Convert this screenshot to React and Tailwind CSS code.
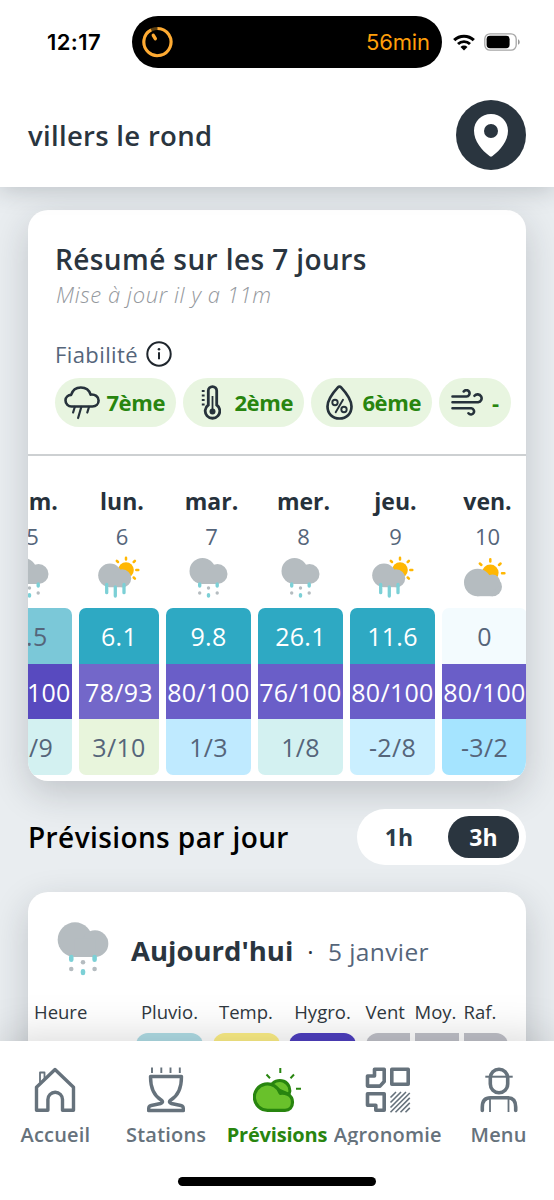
import clsx from "clsx";

const days = [
  { name: "dim.", date: 5, icon: "sleet", rain: "0.5", hygro: "93/100", temp: "-1/9", width: "w-[85px]", rainBg: "bg-[#7bc8d8] text-[#55657a]", hygroBg: "bg-[#584abf]", tempBg: "bg-[#d3f1f1]" },
  { name: "lun.", date: 6, icon: "sunRain", rain: "6.1", hygro: "78/93", temp: "3/10", width: "w-[80px]", rainBg: "bg-[#2ea9c3] text-white", hygroBg: "bg-[#7367c9]", tempBg: "bg-[#e8f5dc]" },
  { name: "mar.", date: 7, icon: "sleet", rain: "9.8", hygro: "80/100", temp: "1/3", width: "w-[85px]", rainBg: "bg-[#2ea9c3] text-white", hygroBg: "bg-[#6a5ec8]", tempBg: "bg-[#bfeaff]" },
  { name: "mer.", date: 8, icon: "sleet", rain: "26.1", hygro: "76/100", temp: "1/8", width: "w-[85px]", rainBg: "bg-[#2ea9c3] text-white", hygroBg: "bg-[#6a5ec8]", tempBg: "bg-[#d3f1f1]" },
  { name: "jeu.", date: 9, icon: "sunRain", rain: "11.6", hygro: "80/100", temp: "-2/8", width: "w-[85px]", rainBg: "bg-[#2ea9c3] text-white", hygroBg: "bg-[#6a5ec8]", tempBg: "bg-[#caefff]" },
  { name: "ven.", date: 10, icon: "sunCloud", rain: "0", hygro: "80/100", temp: "-3/2", width: "w-[85px]", rainBg: "bg-[#f3fbfe] text-[#55657a]", hygroBg: "bg-[#6a5ec8]", tempBg: "bg-[#a5e4ff]" }
];

const columns = [
  { label: "Pluvio.", className: "w-[67px] mr-[9.5px] text-center", bar: "rounded-t-xl bg-[#b0dde6]" },
  { label: "Temp.", className: "w-[67px] mr-[9.5px] text-center", bar: "rounded-t-xl bg-[#fdef86]" },
  { label: "Hygro.", className: "w-[67px] mr-[9.5px] text-center", bar: "rounded-t-xl bg-[#4e3fc0]" },
  { label: "Vent", className: "w-[44px] mr-[5px]", bar: "rounded-tl-xl bg-[#c0c1c9]" },
  { label: "Moy.", className: "w-[44px] mr-[5px]", bar: "bg-[#c0c1c9]" },
  { label: "Raf.", className: "w-[44px]", bar: "rounded-tr-xl bg-[#c0c1c9]" }
];

function SleetIcon({ className }) {
  return (
    <svg viewBox="0 0 39 40" className={className}>
      <g fill="#b5bcc0">
        <circle cx="13.5" cy="13" r="13" />
        <circle cx="28.5" cy="16" r="10" />
        <path d="M13 12h16v14H13z" />
        <circle cx="19.5" cy="30" r="1.7" />
        <circle cx="10.7" cy="35" r="1.7" />
        <circle cx="28.2" cy="35" r="1.7" />
      </g>
      <path d="M10.7 26v2M28.2 26v2M19.5 36.7v1.3" stroke="#7cd0d6" strokeWidth="3.4" strokeLinecap="round" />
    </svg>
  );
}

function SunRainIcon({ className }) {
  return (
    <svg viewBox="0 0 42 42" className={className}>
      <circle cx="28" cy="14" r="7.8" fill="#ffb703" />
      <path d="M28 1.8v1.8M35.7 6l1.2-1.2M38.3 14h2M35.7 21.5l1.2 1.2M20 6l-1.2-1.2" stroke="#ffb703" strokeWidth="2.5" strokeLinecap="round" />
      <g fill="#b5bcc0">
        <circle cx="12" cy="19.3" r="11.8" />
        <circle cx="24.2" cy="22.3" r="9" />
        <path d="M11 19h14v12.2H11z" />
      </g>
      <path d="M8.7 28.5v8.2M17.3 31v9M26 28.5v8.2" stroke="#7cd0d6" strokeWidth="3.3" strokeLinecap="round" />
    </svg>
  );
}

function SunCloudIcon({ className }) {
  return (
    <svg viewBox="0 0 42 40" className={className}>
      <circle cx="26.3" cy="14.8" r="8.3" fill="#ffb703" />
      <path d="M26.3 1.3v2.2M17.4 7l-1.6-1.5M35 7l1.6-1.5M38 15.3h2.4" stroke="#ffb703" strokeWidth="2.5" strokeLinecap="round" />
      <g fill="#b5bcc0">
        <circle cx="13.7" cy="24.5" r="13.7" />
        <circle cx="28.5" cy="28.7" r="9.5" />
        <circle cx="28.5" cy="24" r="7.6" />
        <path d="M13 24h16v14.2H13z" />
      </g>
    </svg>
  );
}

function DayIcon({ type }) {
  if (type === "sleet") return <SleetIcon className="mt-[2px] h-10 w-[39px]" />;
  if (type === "sunRain") return <SunRainIcon className="h-[42px] w-[42px]" />;
  return <SunCloudIcon className="mt-[2px] h-10 w-[42px]" />;
}

function StatusBar() {
  return (
    <div className="flex h-[52px] items-center font-['Inter',sans-serif]">
      <span className="ml-[47px] w-[85px] text-[22px] font-semibold tracking-[0.4px] text-black">12:17</span>
      <div className="flex h-[52px] w-[310px] items-center justify-between rounded-full bg-black pr-[12px] pl-[10px]">
        <svg viewBox="0 0 32 32" className="h-8 w-8" fill="none" strokeLinecap="round">
          <circle cx="15.5" cy="16" r="13.6" stroke="#5a3f12" strokeWidth="3" />
          <path d="M15.5 2.4A13.6 13.6 0 1 1 9.2 3.9" stroke="#ffab33" strokeWidth="3" strokeLinecap="butt" />
          <path d="M11.3 9.3l2 3.4" stroke="#ffab33" strokeWidth="3.4" />
        </svg>
        <span className="text-[22px] tracking-[-0.1px] text-[#ff9f0a]">56min</span>
      </div>
      <svg viewBox="0 0 22 17" className="ml-[11px] h-[17px] w-[22px]">
        <path d="M1.2 6.2a14 14 0 0 1 19.6 0" stroke="#000" strokeWidth="3.1" fill="none" />
        <path d="M5 10a8.7 8.7 0 0 1 12 0" stroke="#000" strokeWidth="2.9" fill="none" />
        <path d="M7.5 12.9a5 5 0 0 1 7 0L11 16.4z" fill="#000" />
      </svg>
      <svg viewBox="0 0 37 18" className="ml-[9px] h-[18px] w-[37px]">
        <rect x="0.8" y="0.8" width="31.4" height="16.4" rx="5.2" fill="none" stroke="#a5a5a5" strokeWidth="1.3" />
        <rect x="2.6" y="2.8" width="23" height="12.4" rx="3.4" fill="#000" />
        <path d="M34 6.2c2.3 1 2.3 4.6 0 5.6z" fill="#9a9a9a" />
      </svg>
    </div>
  );
}

function Header() {
  return (
    <header className="relative z-10 h-[187px] shrink-0 bg-white pt-[16px] shadow-[0_4px_22px_rgba(40,50,60,0.22)]">
      <StatusBar />
      <div className="mt-[32px] flex h-[70px] items-center justify-between px-7">
        <h1 className="pt-px text-[27.5px] font-semibold tracking-[0.3px] text-[#2a353f]">villers le rond</h1>
        <div className="flex h-[70px] w-[70px] items-center justify-center rounded-full bg-[#2a353f]">
          <svg viewBox="0 0 34 43" className="h-[43px] w-[34px]">
            <path fill="#fff" fillRule="evenodd" d="M17 0C7.6 0 0 7.3 0 16.7 0 27 7.7 36 15.8 42.3a2 2 0 0 0 2.4 0C26.3 36 34 27 34 16.7 34 7.3 26.4 0 17 0zm0 10a7 7 0 1 1 0 14 7 7 0 0 1 0-14z" />
          </svg>
        </div>
      </div>
    </header>
  );
}

function Pill({ className, children, label }) {
  return (
    <div className={clsx("flex h-[49px] shrink-0 items-center justify-between rounded-full bg-[#e8f5e0] text-[22px] font-bold text-[#28850f]", className)}>
      {children}
      <span>{label}</span>
    </div>
  );
}

function Reliability() {
  return (
    <div className="mt-[10px] flex gap-[7px] pl-[27px]">
      <Pill className="w-[121px] pr-[11px] pl-[9px] tracking-[-0.4px]" label="7ème">
        <svg viewBox="0 0 36 34" className="h-[34px] w-9" fill="none" stroke="#26323b" strokeWidth="2.6" strokeLinecap="round" strokeLinejoin="round">
          <path d="M8 20.5a6 6 0 0 1-6.5-6.2c0-3.3 2.8-5.4 5.6-5.4C8.6 4.2 12.5 1.5 16.8 1.5c5 0 8.6 3 9.8 7.1 4.4-.5 8 2 8 6 0 3.6-2.6 5.9-6.2 5.9H8z" />
          <path d="M10.8 21l-1.7 5.5M17.3 21l-3.2 11M25 21l-1.7 5.5" strokeWidth="2.2" />
        </svg>
      </Pill>
      <Pill className="w-[121px] pr-[11px] pl-[18px] tracking-[-0.4px]" label="2ème">
        <svg viewBox="0 0 20 36" className="h-9 w-5" fill="none" stroke="#26323b">
          <path d="M7.3 20V5.800a4.200 4.200 0 0 1 8.400 0V20a7.300 7.300 0 1 1-8.400 0z" strokeWidth="2.8" />
          <path d="M11.5 11v15" strokeWidth="1.8" />
          <circle cx="11.5" cy="26.5" r="3" fill="#26323b" stroke="none" />
          <path d="M0.8 6h2.8M0.8 10.500h2.800M0.800 15h2.800M0.800 19.500h2.800" strokeWidth="1.8" />
        </svg>
      </Pill>
      <Pill className="w-[121px] pr-[11px] pl-[15px] tracking-[-0.4px]" label="6ème">
        <svg viewBox="0 0 27 35" className="h-[35px] w-[27px]" fill="none" stroke="#26323b" strokeLinecap="round">
          <path d="M11.9 2.4C6.5 8.2 1.5 14.8 1.5 21.5c0 7.2 5 12 12 12s12-4.8 12-12c0-6.7-5-13.3-10.4-19.1a2.200 2.200 0 0 0-3.200 0z" strokeWidth="2.7" />
          <g strokeWidth="1.9">
            <circle cx="9" cy="17.5" r="2.7" />
            <circle cx="18" cy="24.5" r="2.7" />
            <path d="M17 14.8L9.7 27.2" />
          </g>
        </svg>
      </Pill>
      <Pill className="w-[72px] pr-[12px] pl-[12px]" label="-">
        <svg viewBox="0 0 33 27" className="h-[27px] w-[33px]" fill="none" stroke="#26323b" strokeWidth="2.6" strokeLinecap="round">
          <path d="M1.5 7.5h14a3.2 3.2 0 1 0-2.800-5M1.5 13.3h25.600a4 4 0 1 0-3.600-6.500M1.5 19.3h18.800a3.100 3.100 0 1 1-2.800 5" />
        </svg>
      </Pill>
    </div>
  );
}

function DayColumn({ day }) {
  return (
    <div className={clsx("flex shrink-0 flex-col items-center", day.width)}>
      <div className="pt-px pl-[6px] text-[23px] leading-8 font-bold text-[#26313b]">{day.name}</div>
      <div className="mt-[7px] pl-[6px] text-[22px] leading-6 text-[#55657a]">{day.date}</div>
      <div className="mt-2 flex h-[42px] justify-center">
        <DayIcon type={day.icon} />
      </div>
      <div className="mt-[10px] flex w-full flex-col overflow-hidden rounded-[7px] text-[25px] tracking-[0.3px] whitespace-nowrap">
        <div className={clsx("flex h-[55.5px] items-center justify-center pt-[2px]", day.rainBg)}>{day.rain}</div>
        <div className={clsx("flex h-[55.5px] items-center justify-center pt-[2px] text-white", day.hygroBg)}>{day.hygro}</div>
        <div className={clsx("flex h-[55.5px] items-center justify-center pt-[2px] text-[#55657a]", day.tempBg)}>{day.temp}</div>
      </div>
    </div>
  );
}

function SummaryCard() {
  return (
    <section className="h-[571px] shrink-0 overflow-hidden rounded-[20px] bg-white pt-[30px] shadow-[0_12px_36px_rgba(30,35,45,0.2)]">
      <h2 className="pt-px pl-[27px] text-[28px] leading-9 font-semibold tracking-[0.4px] text-[#2a353f]">Résumé sur les 7 jours</h2>
      <p className="mt-[3px] pl-[28px] text-[22px] leading-7 font-light tracking-[0.6px] text-[#94989d] italic">Mise à jour il y a 11m</p>
      <div className="mt-8 flex items-center gap-[8px] pl-[27px]">
        <span className="text-[22px] leading-7 tracking-[0.4px] text-[#55657a]">Fiabilité</span>
        <svg viewBox="0 0 26 26" className="h-[26px] w-[26px]" fill="none" stroke="#1f262d" strokeWidth="2">
          <circle cx="13" cy="13" r="11.7" />
          <path d="M13 11.3v7" />
          <circle cx="13" cy="8.3" r="1.3" fill="#1f262d" stroke="none" />
        </svg>
      </div>
      <Reliability />
      <div className="mt-[27px] h-[2px] bg-[#cdd0d2]" />
      <div className="mt-7 -ml-[41px] flex w-[600px] gap-[7px]">
        {days.map((day) => (
          <DayColumn key={day.name} day={day} />
        ))}
      </div>
    </section>
  );
}

function StepToggle() {
  return (
    <div className="flex h-14 w-[169px] items-center rounded-full bg-white pr-[7px] text-[23px] font-bold">
      <button className="w-[84px] text-[#2a3c4a]">1h</button>
      <button className="ml-auto h-[42px] w-[71px] rounded-full bg-[#2a353f] text-white">3h</button>
    </div>
  );
}

function TodayCard() {
  return (
    <section className="mt-[27px] h-[300px] shrink-0 rounded-[20px] bg-white pt-[30px] shadow-[0_12px_36px_rgba(30,35,45,0.2)]">
      <div className="flex h-[54px] items-center pl-[29px]">
        <SleetIcon className="h-[54px] w-[52px]" />
        <div className="mt-[5px] flex items-baseline pl-[22px] leading-9">
          <h3 className="w-[162px] text-[27.5px] font-bold whitespace-nowrap text-[#2a353f]">Aujourd'hui</h3>
          <span className="w-[35px] text-center text-[24px] text-[#2a353f]">·</span>
          <span className="text-[24.5px] tracking-[0.4px] text-[#55657a]">5 janvier</span>
        </div>
      </div>
      <div className="mt-6 flex pl-[6px] text-[18.5px] leading-6 text-[#2f3840]">
        <div className="w-[102px]">Heure</div>
        {columns.map((col) => (
          <div key={col.label} className={col.className}>
            {col.label}
            <div className={clsx("mt-[9px] h-[50px]", col.bar)} />
          </div>
        ))}
      </div>
    </section>
  );
}

function HomeIcon() {
  return (
    <svg viewBox="0 0 42 46" className="h-[46px] w-[42px]" fill="none" stroke="#66727c" strokeWidth="3.4" strokeLinejoin="round">
      <path d="M2.5 20.3L21 2.6l18.5 17.7v23h-11V32.5a7.300 7.300 0 0 0-14.600 0v10.800H2.5z" />
      <path d="M6 15.5V5.5h4.500v7" strokeWidth="1.8" />
    </svg>
  );
}

function StationIcon() {
  return (
    <svg viewBox="0 0 38 46" className="h-[46px] w-[38px]" fill="none" stroke="#66727c" strokeWidth="3.4" strokeLinejoin="round">
      <path d="M3.5 9.5h31c0 11.500-3 19-10.700 23.500-2 1.400-1.700 3 .5 3.500l9.500 2c2 .5 2.600 1 2.600 5H1.600c0-4 .6-4.500 2.600-5l9.500-2c2.200-.5 2.500-2.100.5-3.500C6.500 28.500 3.500 21 3.500 9.500z" />
      <path d="M5 .5v5.500M14.300 .5v5.500M23.500 .5v5.500M32.800 .5v5.500" strokeWidth="1.9" />
    </svg>
  );
}

function ForecastIcon() {
  return (
    <svg viewBox="0 0 48 46" className="h-[46px] w-12" stroke="#28850f" strokeLinejoin="round">
      <path d="M17.5 19.5a10 10 0 1 1 18.500 8z" fill="#69c12b" strokeWidth="3" />
      <path d="M14.5 43.3a13.200 13.200 0 1 1 12.700-17c3.500-.6 12.300.6 12.300 9 0 5-3 8-7.500 8z" fill="#69c12b" strokeWidth="3.2" />
      <path d="M27.3 1v5M13.5 7.5l3.500 3.700M41 7.5l-3.500 3.700M43 21.700h5" strokeWidth="2" />
    </svg>
  );
}

function FieldsIcon() {
  return (
    <svg viewBox="0 0 46 46" className="h-[46px] w-[46px]" fill="none" stroke="#66727c" strokeWidth="3.6" strokeLinejoin="round">
      <path d="M9.5 2.3h9.700v12.200l-4.200 4.600H2.5V9h7zM26.800 2.300H43.200v14.900H26.800zM2.500 26.700h16.700v16.600h-8.400v-5H2.500z" />
      <path d="M25.5 30.5l5.500-5.500M25.5 35.5L36 25M25.5 40.5L41 25M25.5 45.200L44.800 26M30.500 45.200l14.300-14.300M35.500 45.200l9.300-9.300M40.500 45.200l4.300-4.300" strokeWidth="1.6" />
    </svg>
  );
}

function FarmerIcon() {
  return (
    <svg viewBox="0 0 38 46" className="h-[46px] w-[38px]" fill="none" stroke="#66727c" strokeWidth="3.6">
      <rect x="10.3" y="2.3" width="17.4" height="23.5" rx="8.7" />
      <path d="M5.3 9.7h27.400" strokeWidth="2" />
      <path d="M2.3 43.500V40c0-6.500 3.200-9.300 8.200-9.300h17c5 0 8.200 2.800 8.200 9.300v3.500" strokeLinecap="round" />
      <path d="M10 32v13M28.500 32v13" strokeWidth="1.8" />
    </svg>
  );
}

const tabs = [
  { label: "Accueil", Icon: HomeIcon },
  { label: "Stations", Icon: StationIcon },
  { label: "Prévisions", Icon: ForecastIcon, active: true },
  { label: "Agronomie", Icon: FieldsIcon },
  { label: "Menu", Icon: FarmerIcon }
];

function BottomNav() {
  return (
    <nav className="relative z-10 h-[159px] shrink-0 bg-white pt-[26px] shadow-[0_0_44px_rgba(0,0,0,0.18)]">
      <div className="grid grid-cols-5">
        {tabs.map(({ label, Icon, active }) => (
          <button key={label} className={clsx("flex flex-col items-center", active ? "text-[#28850f]" : "text-[#66727c]")}>
            <Icon />
            <span className={clsx("mt-[10px] h-[22px] overflow-hidden text-[20px] leading-[23px] whitespace-nowrap", active ? "font-bold tracking-[-0.2px]" : "font-semibold tracking-[0.2px]")}>{label}</span>
          </button>
        ))}
      </div>
      <div className="mx-auto mt-[32px] h-[9px] w-[198px] rounded-full bg-black" />
    </nav>
  );
}

export default function App() {
  return (
    <div className="flex h-[1200px] w-[554px] flex-col overflow-hidden bg-[#e9edf0] font-['Open_Sans',sans-serif]">
      <Header />
      <main className="flex min-h-0 flex-1 flex-col px-7 pt-[23px]">
        <SummaryCard />
        <div className="mt-7 flex h-14 shrink-0 items-center justify-between">
          <h2 className="text-[28px] font-semibold tracking-[0.4px] text-black">Prévisions par jour</h2>
          <StepToggle />
        </div>
        <TodayCard />
      </main>
      <BottomNav />
    </div>
  );
}
